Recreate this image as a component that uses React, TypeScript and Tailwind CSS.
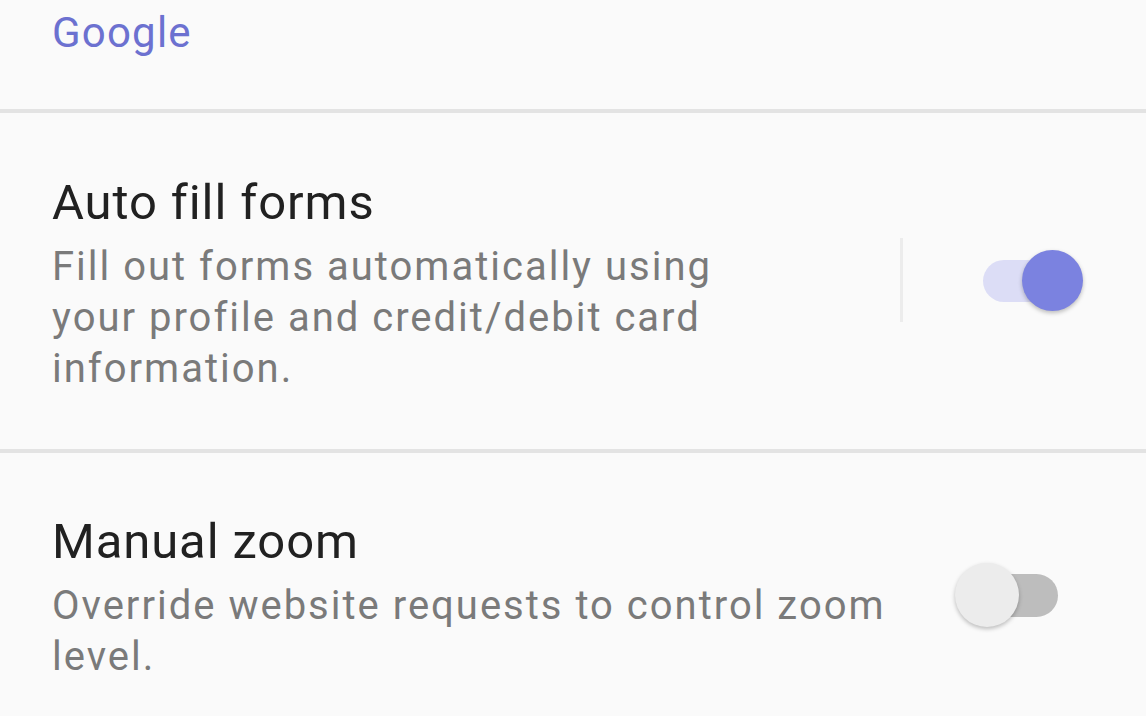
export default function App() {
  return (
    <main className="w-[1146px] h-[716px] overflow-hidden bg-[#fafafa] font-['Roboto',sans-serif]">
      {/* account row */}
      <div className="h-[109px] pl-[52px] pt-[12px]">
        <span className="text-[42px] leading-none tracking-[1.2px] text-[#6c71d0]">Google</span>
      </div>
      <div className="h-[4px] bg-[#e3e3e3]" />

      {/* auto fill */}
      <div className="flex items-start h-[336px] pl-[52px] pr-[63px] pt-[65px]">
        <div className="w-[690px]">
          <h2 className="text-[49px] leading-none tracking-[0.9px] text-[#212121]">Auto fill forms</h2>
          <p className="mt-[14px] text-[40px] leading-[51px] tracking-[2px] text-[#7a7a7a]">
            Fill out forms automatically using your profile and credit/debit card information.
          </p>
        </div>
        <div className="flex-1" />
        <div className="mt-[60px] w-[3px] h-[84px] bg-[#ececec]" />
        <div className="relative mt-[72px] ml-[80px] w-[100px] h-[62px]">
          <div className="absolute left-0 top-[10px] w-[90px] h-[42px] rounded-full bg-[#dcddf6]" />
          <div className="absolute right-0 top-0 w-[61px] h-[61px] rounded-full bg-[#7b82e0] shadow-[0_2px_4px_rgba(0,0,0,0.25)]" />
        </div>
      </div>
      <div className="h-[4px] bg-[#e3e3e3]" />

      {/* manual zoom */}
      <div className="flex items-start pl-[52px] pr-[88px] pt-[64px]">
        <div className="w-[880px]">
          <h2 className="text-[49px] leading-none tracking-[0.9px] text-[#212121]">Manual zoom</h2>
          <p className="mt-[14px] text-[40px] leading-[51px] tracking-[2px] text-[#7a7a7a]">
            Override website requests to control zoom level.
          </p>
        </div>
        <div className="flex-1" />
        <div className="relative mt-[46px] w-[103px] h-[64px]">
          <div className="absolute right-0 top-[11px] w-[85px] h-[43px] rounded-full bg-[#bdbdbd]" />
          <div className="absolute left-0 top-0 w-[64px] h-[64px] rounded-full bg-[#ececec] shadow-[0_2px_4px_rgba(0,0,0,0.25)]" />
        </div>
      </div>
    </main>
  );
}
